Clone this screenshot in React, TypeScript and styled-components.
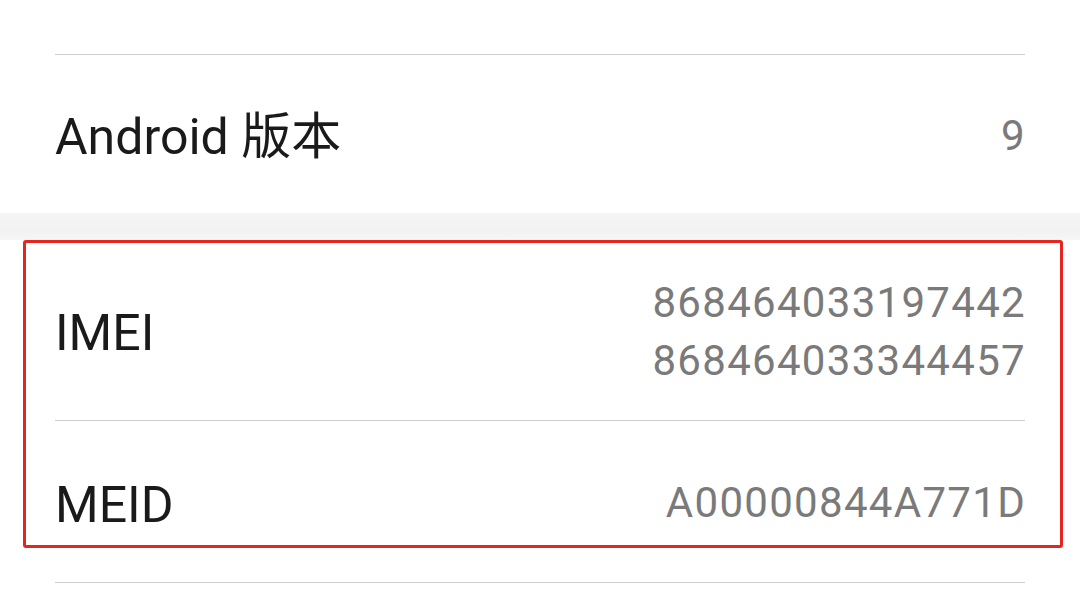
import React from "react";
import styled, { createGlobalStyle } from "styled-components";

const GlobalStyle = createGlobalStyle`
  html, body {
    margin: 0;
    padding: 0;
    background: #ffffff;
  }
  body {
    font-family: Roboto, "Noto Sans", "Noto Sans CJK SC", sans-serif;
    -webkit-font-smoothing: antialiased;
  }
`;

const Page = styled.div`
  width: 1080px;
  height: 590px;
  overflow: hidden;
  display: flex;
  flex-direction: column;
  background: #ffffff;
`;

const Section = styled.div`
  display: flex;
  flex-direction: column;
  background: #ffffff;
`;

const Group = styled.div`
  position: relative;
  display: flex;
  flex-direction: column;
`;

const Row = styled.div<{ $h: number; $divider?: boolean }>`
  flex: none;
  height: ${(p) => p.$h}px;
  margin: 0 55px;
  display: flex;
  align-items: center;
  justify-content: space-between;
  box-sizing: border-box;
  border-bottom: ${(p) => (p.$divider ? "1.5px solid #cdcdcd" : "none")};
`;

const Label = styled.div`
  font-family: Roboto, "Noto Sans CJK SC", sans-serif;
  font-size: 50px;
  line-height: 1;
  color: #1a1a1a;
  padding-top: 6px;
`;

const Value = styled.div`
  font-family: Roboto, sans-serif;
  font-size: 42px;
  line-height: 58px;
  letter-spacing: 1.3px;
  color: #7a7a7a;
  text-align: right;
  margin-right: -1px;
  padding-top: 3px;
`;

const Band = styled.div`
  flex: none;
  height: 27px;
  background: linear-gradient(#f5f5f5, #f2f2f2 70%, #f7f7f7);
`;

const Highlight = styled.div`
  position: absolute;
  left: 23px;
  top: 0;
  width: 1040px;
  height: 308px;
  box-sizing: border-box;
  border: 3px solid #e4261f;
  border-radius: 3px;
  pointer-events: none;
`;

export default function App() {
  return (
    <>
      <GlobalStyle />
      <Page>
        <Section>
          <Row $h={55} $divider />
          <Row $h={158}>
            <Label>Android 版本</Label>
            <Value>9</Value>
          </Row>
        </Section>
        <Band />
        <Group>
          <Row $h={181} $divider>
            <Label>IMEI</Label>
            <Value>
              868464033197442
              <br />
              868464033344457
            </Value>
          </Row>
          <Row $h={162} $divider>
            <Label>MEID</Label>
            <Value>A00000844A771D</Value>
          </Row>
          <Highlight />
        </Group>
      </Page>
    </>
  );
}
